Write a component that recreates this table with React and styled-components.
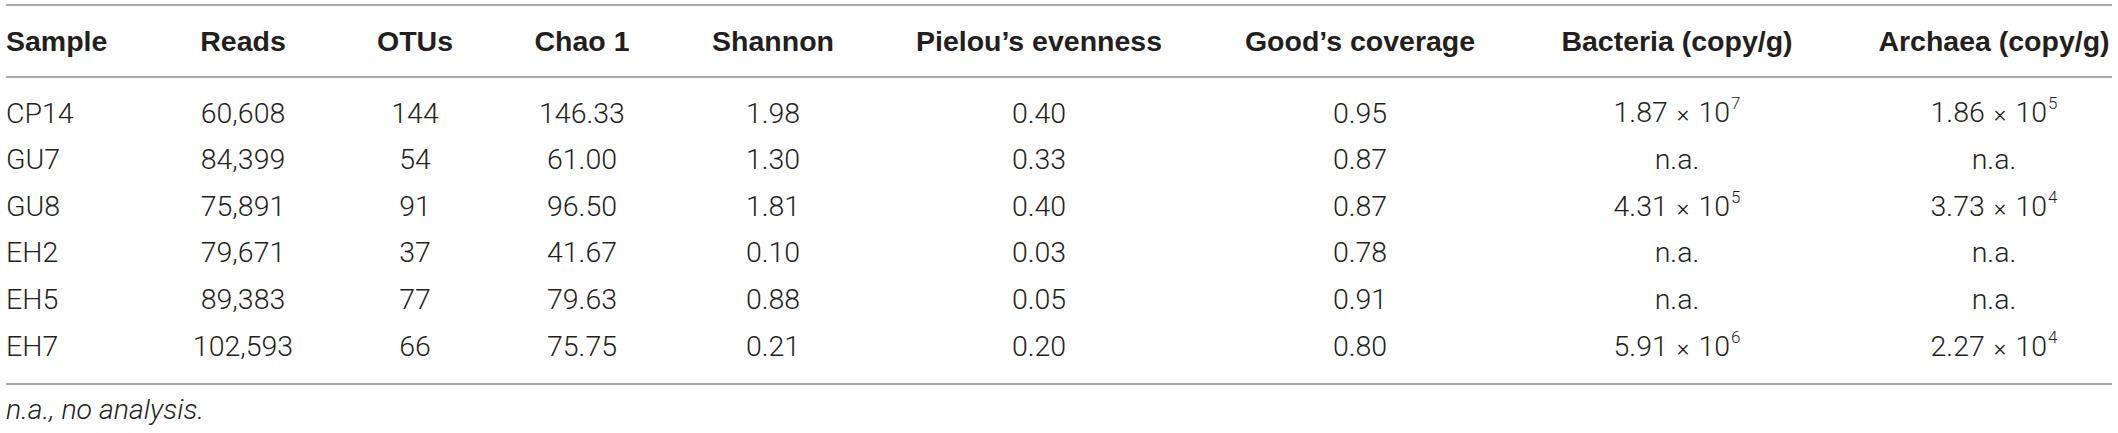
import React from "react";
import styled, { createGlobalStyle } from "styled-components";

const GlobalStyle = createGlobalStyle`
  html, body {
    margin: 0;
    padding: 0;
    background: #ffffff;
  }
`;

const COLUMNS = "104px 266px 78px 256px 126px 406px 236px 398px 236px";

const Page = styled.div`
  padding: 4px 6px 0 6px;
  width: 2106px;
  font-family: Roboto, "Liberation Sans", Arial, sans-serif;
  color: #231f20;
`;

const Table = styled.div`
  border-top: 2px solid #a9a9a9;
  border-bottom: 2px solid #a9a9a9;
`;

const HeaderRow = styled.div`
  display: grid;
  grid-template-columns: ${COLUMNS};
  height: 70px;
  align-items: center;
  border-bottom: 2px solid #a9a9a9;
`;

const HeadCell = styled.div`
  font-family: "Liberation Sans", Arial, sans-serif;
  font-weight: 700;
  font-size: 28.5px;
  line-height: 70px;
  white-space: nowrap;
  color: #231f20;
  text-align: ${(p) => (p.$left ? "left" : "center")};
`;

const Body = styled.div`
  padding: 12px 0;
`;

const Row = styled.div`
  display: grid;
  grid-template-columns: ${COLUMNS};
  height: 46.8px;
  align-items: center;
`;

const Cell = styled.div`
  font-family: Roboto, "Liberation Sans", Arial, sans-serif;
  font-weight: 300;
  font-size: 28.5px;
  line-height: 46.8px;
  white-space: nowrap;
  color: #231f20;
  text-align: ${(p) => (p.$left ? "left" : "center")};
`;

const Times = styled.span`
  font-size: 24px;
  margin: 0 9px;
`;

const Sup = styled.sup`
  font-size: 17px;
  line-height: 0;
  vertical-align: 13px;
  margin-left: 1px;
`;

const Footnote = styled.div`
  padding-top: 8px;
  font-family: Roboto, "Liberation Sans", Arial, sans-serif;
  font-weight: 300;
  font-style: italic;
  font-size: 28.5px;
  line-height: 34px;
  color: #231f20;
`;

const headers = [
  "Sample",
  "Reads",
  "OTUs",
  "Chao 1",
  "Shannon",
  "Pielou\u2019s evenness",
  "Good\u2019s coverage",
  "Bacteria (copy/g)",
  "Archaea (copy/g)",
];

const rows = [
  ["CP14", "60,608", "144", "146.33", "1.98", "0.40", "0.95", ["1.87", "7"], ["1.86", "5"]],
  ["GU7", "84,399", "54", "61.00", "1.30", "0.33", "0.87", null, null],
  ["GU8", "75,891", "91", "96.50", "1.81", "0.40", "0.87", ["4.31", "5"], ["3.73", "4"]],
  ["EH2", "79,671", "37", "41.67", "0.10", "0.03", "0.78", null, null],
  ["EH5", "89,383", "77", "79.63", "0.88", "0.05", "0.91", null, null],
  ["EH7", "102,593", "66", "75.75", "0.21", "0.20", "0.80", ["5.91", "6"], ["2.27", "4"]],
];

function Sci({ value }) {
  if (!value) return <>n.a.</>;
  return (
    <>
      {value[0]}
      <Times>×</Times>10
      <Sup>{value[1]}</Sup>
    </>
  );
}

export default function App() {
  return (
    <>
      <GlobalStyle />
      <Page>
        <Table>
          <HeaderRow>
            {headers.map((h, i) => (
              <HeadCell key={h} $left={i === 0}>
                {h}
              </HeadCell>
            ))}
          </HeaderRow>
          <Body>
            {rows.map((r) => (
              <Row key={r[0]}>
                {r.slice(0, 7).map((v, i) => (
                  <Cell key={i} $left={i === 0}>
                    {v}
                  </Cell>
                ))}
                <Cell>
                  <Sci value={r[7]} />
                </Cell>
                <Cell>
                  <Sci value={r[8]} />
                </Cell>
              </Row>
            ))}
          </Body>
        </Table>
        <Footnote>n.a., no analysis.</Footnote>
      </Page>
    </>
  );
}
